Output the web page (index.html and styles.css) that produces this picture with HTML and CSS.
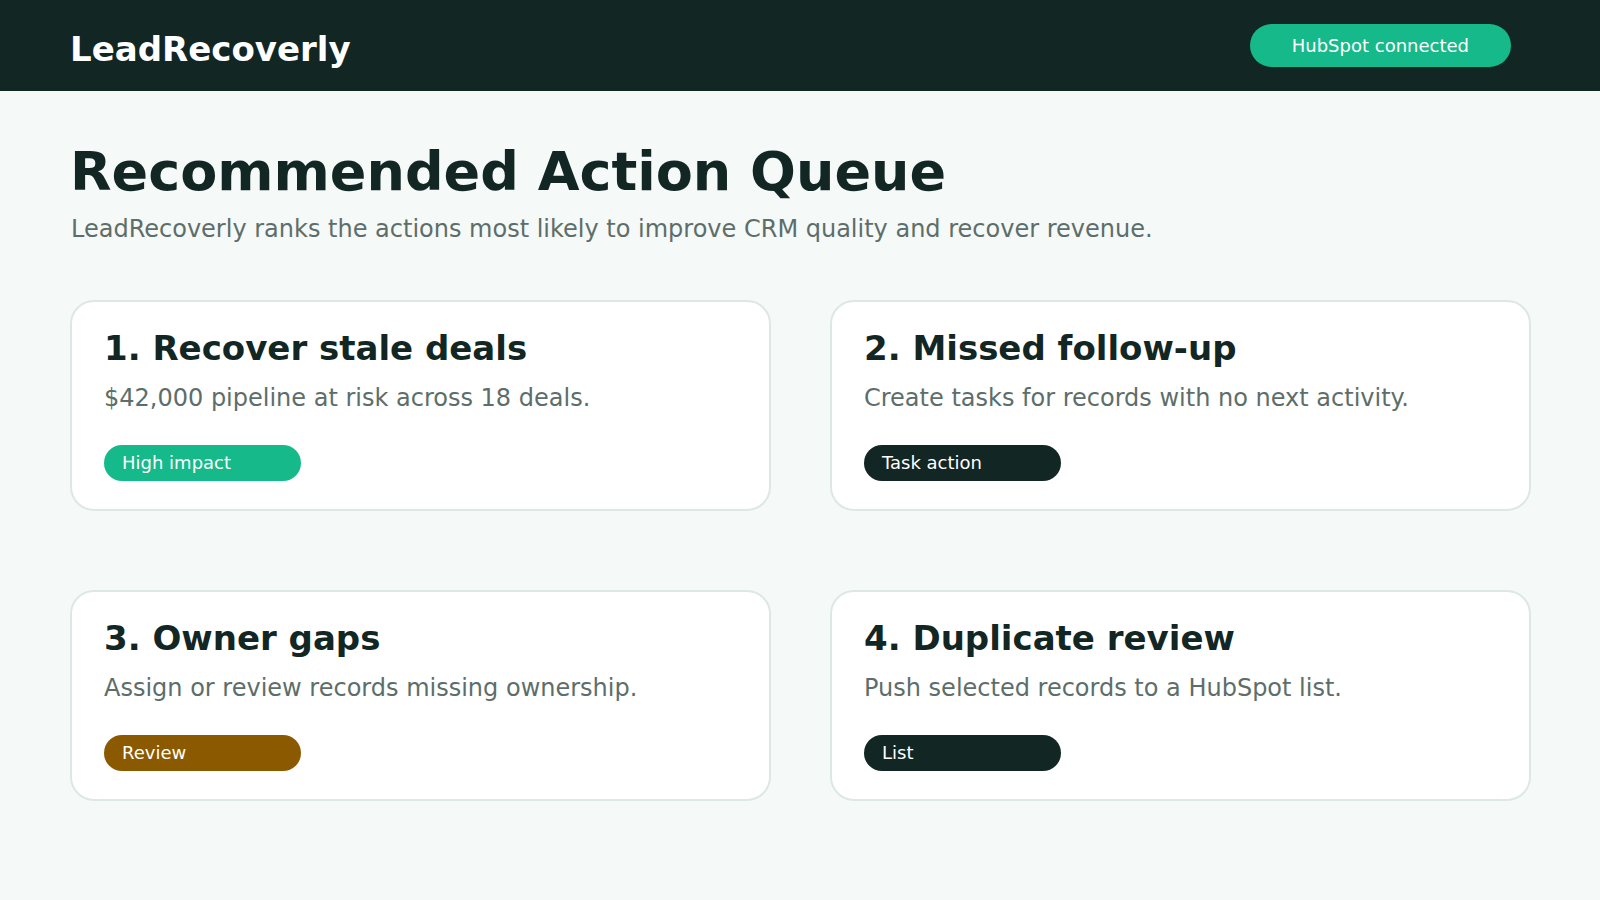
FILE: index.html
```html
<!DOCTYPE html>
<html lang="en">
<head>
<meta charset="utf-8">
<title>LeadRecoverly</title>
<link rel="stylesheet" href="styles.css">
</head>
<body>
<header class="topbar">
  <div class="logo">LeadRecoverly</div>
  <div class="status">HubSpot connected</div>
</header>
<main class="page">
  <h1 class="title">Recommended Action Queue</h1>
  <p class="subtitle">LeadRecoverly ranks the actions most likely to improve CRM quality and recover revenue.</p>
  <section class="grid">
    <article class="card">
      <h2 class="card-title">1. Recover stale deals</h2>
      <p class="card-text">$42,000 pipeline at risk across 18 deals.</p>
      <span class="tag tag-green">High impact</span>
    </article>
    <article class="card">
      <h2 class="card-title">2. Missed follow-up</h2>
      <p class="card-text">Create tasks for records with no next activity.</p>
      <span class="tag tag-dark">Task action</span>
    </article>
    <article class="card">
      <h2 class="card-title">3. Owner gaps</h2>
      <p class="card-text">Assign or review records missing ownership.</p>
      <span class="tag tag-brown">Review</span>
    </article>
    <article class="card">
      <h2 class="card-title">4. Duplicate review</h2>
      <p class="card-text">Push selected records to a HubSpot list.</p>
      <span class="tag tag-dark">List</span>
    </article>
  </section>
</main>
</body>
</html>
```

FILE: styles.css
```css
* { box-sizing: border-box; }
html, body {
  margin: 0;
  padding: 0;
}
body {
  background: #f5f9f8;
  font-family: "DejaVu Sans", "Liberation Sans", sans-serif;
  color: #122624;
  width: 1600px;
  height: 900px;
  overflow: hidden;
}
.topbar {
  height: 91px;
  background: #122624;
  display: flex;
  align-items: center;
  justify-content: space-between;
  padding: 0 89px 0 70px;
}
.logo {
  color: #ffffff;
  font-weight: 700;
  font-size: 34px;
  line-height: 40px;
  margin-top: 6px;
}
.status {
  background: #16b98a;
  color: #ffffff;
  font-size: 18px;
  line-height: 21px;
  padding: 11px 42px;
  border-radius: 22px;
}
.page {
  padding: 49px 69px 0 70px;
}
.title {
  margin: 0;
  font-size: 54px;
  font-weight: 700;
  line-height: 63px;
  color: #122624;
}
.subtitle {
  margin: 12px 0 0 1px;
  font-size: 24px;
  line-height: 28px;
  color: #5d6e6a;
}
.grid {
  margin-top: 57px;
  display: grid;
  grid-template-columns: 1fr 1fr;
  column-gap: 59px;
  row-gap: 79px;
}
.card {
  background: #ffffff;
  border: 2px solid #dde8e5;
  border-radius: 24px;
  padding: 26px 32px 0 32px;
  height: 211px;
}
.card-title {
  margin: 0;
  font-size: 34px;
  font-weight: 700;
  line-height: 41px;
  color: #122624;
}
.card-text {
  margin: 15px 0 0 0;
  font-size: 24px;
  line-height: 28px;
  color: #5d6e6a;
}
.tag {
  display: block;
  width: 197px;
  margin-top: 33px;
  height: 36px;
  padding: 0 18px;
  border-radius: 18px;
  font-size: 18px;
  line-height: 36px;
  color: #ffffff;
}
.tag-green { background: #16b98a; }
.tag-dark { background: #122624; }
.tag-brown { background: #8b5a00; }
```
